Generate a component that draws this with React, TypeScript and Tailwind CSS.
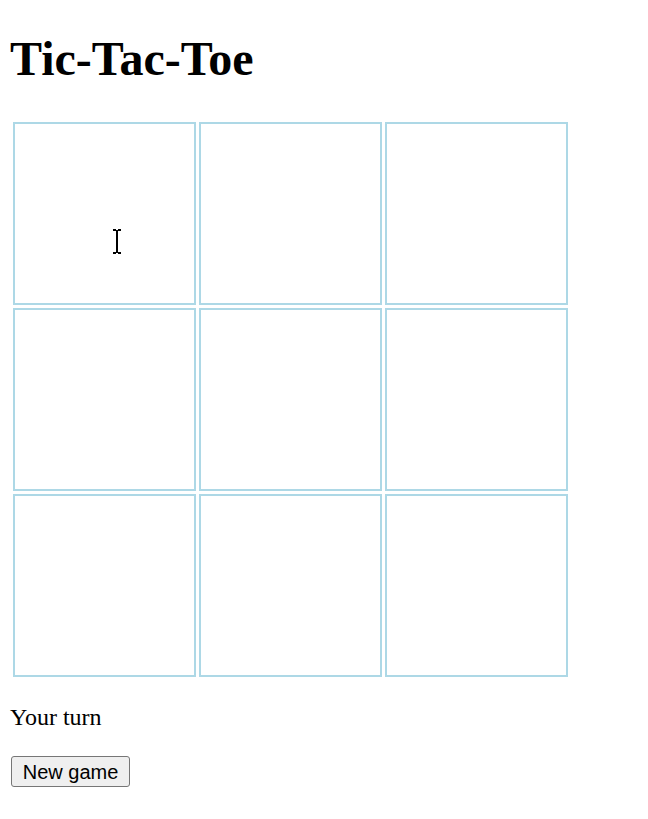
import { useState } from "react";

export default function App() {
  const [cells, setCells] = useState<string[]>(Array(9).fill(""));

  return (
    <div className="min-h-screen bg-white px-[10px] text-black" style={{ fontFamily: '"Liberation Serif", "Times New Roman", serif' }}>
      <h1 className="pt-[35px] text-[48px] font-bold leading-none">Tic-Tac-Toe</h1>

      <div className="relative mt-[39px] ml-[3px] grid w-[555px] grid-cols-[183px_183px_183px] grid-rows-[183px_183px_183px] gap-[3px]">
        {cells.map((c, i) => (
          <div key={i} className="flex items-center justify-center border-2 border-[#add8e6] text-6xl">
            {c}
          </div>
        ))}
        {/* mouse cursor */}
        <svg className="absolute left-[100px] top-[107px]" width="8" height="25" viewBox="0 0 8 25">
          <path d="M0 1h3M5 1h3M4 1v23M0 24h3M5 24h3" stroke="#000" strokeWidth="2" fill="none" />
        </svg>
      </div>

      <p className="mt-[28px] text-[24px] leading-none">Your turn</p>

      <button
        onClick={() => setCells(Array(9).fill(""))}
        className="mt-[27px] ml-px flex h-[31px] w-[119px] items-center justify-center rounded-[3px] border border-[#767676] bg-[#efefef] text-[20px] leading-none"
        style={{ fontFamily: '"Liberation Sans", Arial, sans-serif' }}
      >
        New game
      </button>
    </div>
  );
}
